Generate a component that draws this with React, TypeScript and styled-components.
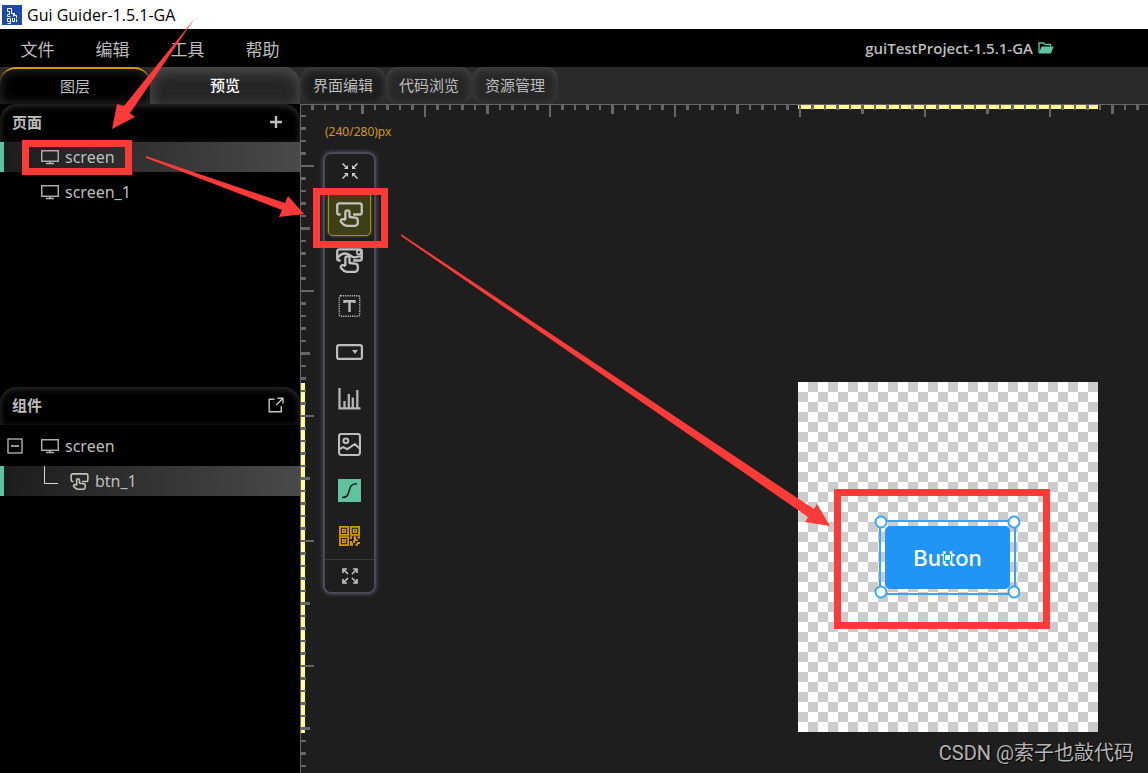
import React from "react";
import styled, { createGlobalStyle, css } from "styled-components";

const ui = `"Noto Sans", "Noto Sans CJK SC", sans-serif`;
const RED = "#fc3a38";
const GREEN = "#5fc3a0";
const TICK = "#666";
const YELLOW = "#ffff90";

const GlobalStyle = createGlobalStyle`
  * { box-sizing: border-box; }
  body { margin: 0; background: #000; }
  button { font: inherit; color: inherit; background: none; border: 0; padding: 0; cursor: pointer; }
  svg { display: block; flex: none; }
`;

const Page = styled.div`
  position: relative;
  display: flex;
  flex-direction: column;
  min-height: 100vh;
  overflow: hidden;
  font-family: ${ui};
  color: #bdbdbd;
  background: #000;
`;

const TitleBar = styled.header`
  display: flex;
  align-items: center;
  gap: 5px;
  height: 29px;
  padding-left: 2px;
  background: #fff;
  color: #000;
  font-family: "Open Sans", sans-serif;
  font-size: 16px;
  line-height: 28px;
`;

const MenuBar = styled.nav`
  display: flex;
  align-items: center;
  justify-content: space-between;
  height: 38px;
  padding-right: 94px;
`;

const MenuItem = styled.button`
  width: 75px;
  height: 38px;
  padding-top: 4px;
  font-size: 17px;
  line-height: 34px;
`;

const Project = styled.button`
  display: flex;
  align-items: center;
  gap: 5px;
  font-family: "Open Sans", sans-serif;
  font-size: 15px;
  font-weight: 600;
`;

const Body = styled.div`
  display: flex;
  flex: 1;
`;

const Sidebar = styled.aside`
  display: flex;
  flex-direction: column;
  width: 300px;
  flex: none;
  background: #000;
`;

const SideTabs = styled.div`
  display: flex;
  height: 37px;
  background: #2b2b2b;
`;

const SideTab = styled.button<{ $current?: boolean }>`
  flex: 1;
  padding-bottom: 2px;
  font-size: 15px;
  border-radius: 16px 16px 0 0;
  ${(p) =>
    p.$current
      ? css`
          background: #000;
          border-top: 2px solid #d69a00;
          box-shadow: inset 0 0 12px #303030;
        `
      : css`
          background: #262626;
          color: #fff;
          font-weight: 500;
          box-shadow: inset 0 4px 14px #525252;
        `}
`;

const Panel = styled.section<{ $basis?: number }>`
  flex: ${(p) => (p.$basis ? `0 0 ${p.$basis}px` : "1")};
`;

const PanelHead = styled.div`
  display: flex;
  align-items: center;
  justify-content: space-between;
  height: 38px;
  padding: 0 15px 2px 12px;
  border-radius: 16px 16px 0 0;
  box-shadow: inset 0 2px 7px #303030;
`;

const PanelTitle = styled.h2`
  margin: 0;
  font-size: 15px;
  font-weight: 700;
  line-height: 20px;
`;

const Tree = styled.div<{ $gap?: number }>`
  display: flex;
  flex-direction: column;
  gap: 5px;
  padding-top: ${(p) => p.$gap ?? 0}px;
`;

const Row = styled.button<{ $selected?: boolean }>`
  display: flex;
  align-items: center;
  gap: 6px;
  width: 100%;
  height: 30px;
  padding-left: 3px;
  font-size: 16px;
  line-height: 30px;
  text-align: left;
  border-left: 4px solid ${(p) => (p.$selected ? GREEN : "transparent")};
  background: ${(p) => (p.$selected ? "linear-gradient(100deg, #1c1c1c, #4a4a4a)" : "none")};
`;

const Lead = styled.span<{ $deep?: boolean }>`
  display: flex;
  align-items: center;
  justify-content: ${(p) => (p.$deep ? "flex-end" : "flex-start")};
  width: ${(p) => (p.$deep ? 57 : 28)}px;
  height: 30px;
  padding-right: ${(p) => (p.$deep ? 6 : 0)}px;
`;

const Workspace = styled.main`
  display: flex;
  flex-direction: column;
  flex: 1;
  min-width: 0;
`;

const WorkTabs = styled.div`
  display: flex;
  height: 37px;
  background: #2b2b2b;
`;

const WorkTab = styled.button<{ $current?: boolean }>`
  width: 86px;
  height: 37px;
  padding-bottom: 2px;
  font-size: 15px;
  border-radius: 12px;
  background: ${(p) => (p.$current ? "#1e1e1e" : "#272727")};
  box-shadow: inset 0 2px 10px #484848;
`;

const Canvas = styled.div`
  position: relative;
  flex: 1;
  overflow: hidden;
  background: #1e1e1e;
`;

const RulerLayer = styled.svg`
  position: absolute;
  inset: 0;
`;

const Coordinates = styled.output`
  position: absolute;
  left: 25px;
  top: 18px;
  color: #d09a08;
  font-size: 12px;
  line-height: 20px;
`;

const Palette = styled.div`
  position: absolute;
  left: 23px;
  top: 48px;
  display: flex;
  flex-direction: column;
  align-items: stretch;
  width: 53px;
  border: 2px solid #4b485a;
  border-radius: 8px;
  box-shadow: 0 0 4px #5a566c;
`;

const Fold = styled.button<{ $foot?: boolean }>`
  display: flex;
  align-items: center;
  justify-content: center;
  height: ${(p) => (p.$foot ? 33 : 34)}px;
  margin-bottom: ${(p) => (p.$foot ? 0 : 3)}px;
  border-top: ${(p) => (p.$foot ? "1px solid #3a3a3a" : "0")};
`;

const Tool = styled.button<{ $current?: boolean }>`
  display: flex;
  align-items: center;
  justify-content: center;
  height: 44px;
  margin: 1px 3px;
  border: 1px solid ${(p) => (p.$current ? "#9a9a00" : "transparent")};
  border-radius: 5px;
  background: ${(p) => (p.$current ? "#3f3f17" : "none")};
  box-shadow: ${(p) => (p.$current ? "0 0 3px #7c7c00" : "none")};
`;

const Screen = styled.div`
  position: absolute;
  left: 498px;
  top: 278px;
  width: 300px;
  height: 350px;
  background: repeating-conic-gradient(#ccc 0 25%, #fff 0 50%) 0 0 / 20px 20px;
`;

const Widget = styled.button`
  position: absolute;
  left: 87px;
  top: 144px;
  width: 125px;
  height: 63px;
  border-radius: 5px;
  background: #2195f6;
  color: #fff;
  font-family: Inter, sans-serif;
  font-size: 22px;
  font-weight: 500;
`;

const Selection = styled.svg`
  position: absolute;
  left: 76px;
  top: 133px;
  pointer-events: none;
`;

const Annotations = styled.svg`
  position: absolute;
  left: 0;
  top: 0;
  pointer-events: none;
`;

const Watermark = styled.div`
  position: absolute;
  right: 14px;
  bottom: 5px;
  font-family: Roboto, "Noto Sans CJK SC", sans-serif;
  font-size: 20px;
  line-height: 30px;
  color: #b4b4b4;
  text-shadow: 1px 1px 1px #000;
`;

const Logo = () => (
  <svg width="20" height="20" viewBox="0 0 20 20">
    <rect width="20" height="20" fill="#1b4aa8" />
    <path
      d="M5.5 3.5H9.5V8.5H12.5V10.5H14.5V13M5.5 3.5V6.5H7.5V9.5H5.5V11.5H8.5M11.5 9V11.5"
      fill="none"
      stroke="#fff"
    />
    <path
      d="M8 13.5H5.5V16.5H8.5M8.5 13.5V18.5H5.5M10.5 13V16.5H12.5V13M14.5 14V17"
      fill="none"
      stroke="#fff"
    />
  </svg>
);

const FolderIcon = () => (
  <svg width="16" height="12" viewBox="0 0 16 12">
    <path d="M1 10.5V1H5.5L7 2.5H12.5V4.5" fill="none" stroke={GREEN} strokeWidth="1.4" />
    <path d="M3.6 4.6H15.6L13 11.6H.6Z" fill={GREEN} />
  </svg>
);

const MonitorIcon = () => (
  <svg width="18" height="15" viewBox="0 0 18 15" fill="none" stroke="#b4b4b4">
    <rect x=".75" y=".75" width="16.5" height="10.5" strokeWidth="1.4" />
    <path d="M9 11V13.5M5 13.6H13" strokeWidth="1.5" />
  </svg>
);

const HAND =
  "M9 17.2V10a2 2 0 0 1 4 0V14.4L18.4 15A2.7 2.7 0 0 1 21 17.7V20a3 3 0 0 1-3 3H11C8.2 23 6.8 21.6 4.8 19.2C4 17 5.8 16 7.4 16.6L9 17.4";

const ButtonIcon = ({ width = 27, height = 25 }: { width?: number; height?: number }) => (
  <svg width={width} height={height} viewBox="0 0 26 24" fill="none" stroke="#c4c4be" strokeWidth="2.2" strokeLinejoin="round">
    <path d="M4.5 12H3.2A2 2 0 0 1 1.2 10V3.2A2 2 0 0 1 3.2 1.2H22.8A2 2 0 0 1 24.8 3.2V10A2 2 0 0 1 22.8 12H16.5" />
    <path d={HAND} />
  </svg>
);

const ImageButtonIcon = () => (
  <svg width="27" height="25" viewBox="0 0 26 24" fill="none" stroke="#c0c0c0" strokeWidth="2.2" strokeLinejoin="round">
    <path d="M4.5 12H3.2A2 2 0 0 1 1.2 10V3.2A2 2 0 0 1 3.2 1.2H22.8A2 2 0 0 1 24.8 3.2V10A2 2 0 0 1 22.8 12H16.5" />
    <path d="M1.2 10C4 6 7 4.8 10 5.4C14 6.4 16 9.6 18.5 9S22 7 25 8.6" />
    <circle cx="22" cy="4" r="2" strokeWidth="1.6" />
    <path d={HAND} />
  </svg>
);

const LabelIcon = () => (
  <svg width="23" height="22" viewBox="0 0 22 22" fill="none" stroke="#bdbdbd">
    <rect x=".8" y=".8" width="20.4" height="20.4" rx="1.5" strokeWidth="1.4" strokeDasharray="1.2 1" />
    <path d="M6 8V6.3H16V8M11 6V17" strokeWidth="2.4" />
  </svg>
);

const DropdownIcon = () => (
  <svg width="27" height="16" viewBox="0 0 27 16">
    <rect x="1.1" y="1.1" width="24.8" height="13.8" rx="2" fill="none" stroke="#bdbdbd" strokeWidth="2.2" />
    <path d="M16 6H22L19 10Z" fill="#bdbdbd" />
  </svg>
);

const ChartIcon = () => (
  <svg width="23" height="23" viewBox="0 0 23 23" fill="none" stroke="#b4b4b4" strokeWidth="2.3">
    <path d="M1.5 1V21.3H22.5M6.5 21V14M10.8 21V7M14.8 21V10.5M19.3 21V3" />
  </svg>
);

const ImageIcon = () => (
  <svg width="23" height="23" viewBox="0 0 22 22" fill="none" stroke="#bdbdbd" strokeWidth="2">
    <rect x="1" y="1" width="20" height="20" rx="2" />
    <circle cx="7.5" cy="7.5" r="2.3" />
    <path d="M1 15.5L5 13.5L9 15.5L16 10.5L21 15" strokeLinejoin="round" />
  </svg>
);

const CurveIcon = () => (
  <svg width="23" height="23" viewBox="0 0 23 23">
    <rect width="23" height="23" fill={GREEN} />
    <path d="M4 18.5C9 18.5 10 16.5 11.2 11.5S14 4.8 19 4.8" fill="none" stroke="#1c1c1c" strokeWidth="1.5" />
  </svg>
);

const QrIcon = () => (
  <svg width="21" height="20" viewBox="0 0 21 20" fill="none" stroke="#d69a00" strokeWidth="1.8">
    <path d="M.9.9H9.1V8.9H.9ZM11.9.9H20.1V8.9H11.9ZM.9 11.1H9.1V19.1H.9Z" />
    <path d="M3.6 3.5H6.4V6.3H3.6ZM14.6 3.5H17.4V6.3H14.6ZM3.6 13.7H6.4V16.5H3.6Z" strokeWidth="1.4" />
    <path
      d="M11 10.3H13V13H11ZM14.5 10.3H17V13.5H19V15H16V17H14V14.5H15V12H14.5ZM18.5 10.3H21V12.5H18.5ZM11 15H13V17H14V19.8H11ZM16.5 17.5H18V16H21V18H19V19.8H16.5Z"
      fill="#d69a00"
      stroke="none"
    />
  </svg>
);

const CollapseIcon = () => (
  <svg width="16" height="16" viewBox="0 0 16 16" fill="#cfcfcf" stroke="#cfcfcf" strokeWidth="1.5">
    <path d="M.5.5L4 4M15.5.5L12 4M.5 15.5L4 12M15.5 15.5L12 12" />
    <path d="M6 2V6H2ZM10 2V6H14ZM6 14V10H2ZM10 14V10H14Z" stroke="none" />
  </svg>
);

const ExpandIcon = () => (
  <svg width="16" height="16" viewBox="0 0 16 16" fill="none" stroke="#bdbdbd" strokeWidth="1.7">
    <path d="M1 5V1H5M1 1L6 6M11 1H15V5M15 1L10 6M1 11V15H5M1 15L6 10M11 15H15V11M15 15L10 10" />
  </svg>
);

const PlusIcon = () => (
  <svg width="18" height="18" viewBox="0 0 18 18">
    <path d="M9 3V15M3 9H15" stroke="#bdbdbd" strokeWidth="2.4" />
  </svg>
);

const ExportIcon = () => (
  <svg width="18" height="18" viewBox="0 0 18 18" fill="none" stroke="#c4c4c4" strokeWidth="1.4">
    <path d="M7.5 3.2H2.2V15.8H14.3V10M10.5 2.2H16V7.5M16 2.2L9.2 9" />
  </svg>
);

const MinusBox = () => (
  <svg width="16" height="16" viewBox="0 0 16 16" fill="none" stroke="#bdbdbd">
    <rect x="1" y="1" width="14" height="14" strokeWidth="1.3" />
    <path d="M4 8H12" strokeWidth="1.6" />
  </svg>
);

const Branch = () => (
  <svg width="14" height="30" viewBox="0 0 14 30">
    <path d="M.5 0V17.5H14" fill="none" stroke="#d8d8d8" />
  </svg>
);

const STEP = 12.5;
const ticks = Array.from({ length: 240 }, (_, i) => i + 1);
const tickLength = (k: number, long: number) => (k % 10 === 0 ? long : k % 5 === 0 ? 9 : 5);

const Rulers = () => (
  <RulerLayer width="100%" height="100%" shapeRendering="crispEdges">
    <rect x="498" y="1" width="300" height="4" fill={YELLOW} />
    <rect x="1" y="279" width="4" height="350" fill={YELLOW} />
    <rect width="100%" height="1" fill={TICK} />
    <rect width="1" height="100%" fill={TICK} />
    {ticks.map((k) => {
      const at = Math.floor(k * STEP);
      const thick = k % 2 ? 3 : 2;
      return <rect key={k} x={at - 1} y="1" width={thick} height={tickLength(k, 12)} fill={TICK} />;
    })}
    {ticks
      .filter((k) => k > 5)
      .map((k) => {
        const at = Math.floor(k * STEP) - 63;
        const thick = k % 2 ? 3 : 2;
        return <rect key={k} x="1" y={at - 1} width={tickLength(k, 13)} height={thick} fill={TICK} />;
      })}
  </RulerLayer>
);

const handles = [
  [5, 7],
  [138, 7],
  [5, 77],
  [138, 77],
];

const tools = [
  { name: "按钮", icon: <ButtonIcon />, current: true },
  { name: "图像按钮", icon: <ImageButtonIcon /> },
  { name: "标签", icon: <LabelIcon /> },
  { name: "下拉列表", icon: <DropdownIcon /> },
  { name: "图表", icon: <ChartIcon /> },
  { name: "图片", icon: <ImageIcon /> },
  { name: "动画", icon: <CurveIcon /> },
  { name: "二维码", icon: <QrIcon /> },
];

export default function App() {
  return (
    <>
      <GlobalStyle />
      <Page>
        <TitleBar>
          <Logo />
          Gui Guider-1.5.1-GA
        </TitleBar>
        <MenuBar>
          <div>
            {["文件", "编辑", "工具", "帮助"].map((label) => (
              <MenuItem key={label}>{label}</MenuItem>
            ))}
          </div>
          <Project>
            guiTestProject-1.5.1-GA
            <FolderIcon />
          </Project>
        </MenuBar>
        <Body>
          <Sidebar>
            <SideTabs>
              <SideTab $current>图层</SideTab>
              <SideTab>预览</SideTab>
            </SideTabs>
            <Panel $basis={283}>
              <PanelHead>
                <PanelTitle>页面</PanelTitle>
                <button aria-label="添加页面">
                  <PlusIcon />
                </button>
              </PanelHead>
              <Tree>
                <Row $selected>
                  <Lead />
                  <MonitorIcon />
                  screen
                </Row>
                <Row>
                  <Lead />
                  <MonitorIcon />
                  screen_1
                </Row>
              </Tree>
            </Panel>
            <Panel>
              <PanelHead>
                <PanelTitle>组件</PanelTitle>
                <button aria-label="弹出组件">
                  <ExportIcon />
                </button>
              </PanelHead>
              <Tree $gap={6}>
                <Row>
                  <Lead>
                    <MinusBox />
                  </Lead>
                  <MonitorIcon />
                  screen
                </Row>
                <Row $selected>
                  <Lead $deep>
                    <Branch />
                  </Lead>
                  <ButtonIcon width={19} height={17} />
                  btn_1
                </Row>
              </Tree>
            </Panel>
          </Sidebar>
          <Workspace>
            <WorkTabs>
              <WorkTab $current>界面编辑</WorkTab>
              <WorkTab>代码浏览</WorkTab>
              <WorkTab>资源管理</WorkTab>
            </WorkTabs>
            <Canvas>
              <Rulers />
              <Coordinates>(240/280)px</Coordinates>
              <Palette>
                <Fold aria-label="收起">
                  <CollapseIcon />
                </Fold>
                {tools.map((tool) => (
                  <Tool key={tool.name} aria-label={tool.name} $current={tool.current}>
                    {tool.icon}
                  </Tool>
                ))}
                <Fold $foot aria-label="展开">
                  <ExpandIcon />
                </Fold>
              </Palette>
              <Screen>
                <Widget>Button</Widget>
                <Selection width="146" height="86" viewBox="-2 0 146 86">
                  <rect x="4" y="6" width="135" height="73" fill="none" stroke="#36a5fa" strokeWidth="2" />
                  {handles.map(([x, y]) => (
                    <circle key={`${x}-${y}`} cx={x} cy={y} r="5.5" fill="#fff" stroke="#36a5fa" strokeWidth="2" />
                  ))}
                  <rect x="68.5" y="39.5" width="6" height="6" fill="#fff" stroke="#14a8b8" />
                </Selection>
              </Screen>
            </Canvas>
          </Workspace>
        </Body>
        <Annotations width="1148" height="773" viewBox="0 0 1148 773" fill={RED}>
          <polygon points="195,18 124,106 117,104 112,129 135,117 130,113" />
          <polygon points="146,156 285,203 288,196 304,214 279,217 282,210 146,158" />
          <polygon points="401,234 814,509 817,504 830,526 805,522 808,517 401,236" />
          <g fill="none" stroke={RED} strokeWidth="7">
            <rect x="25.5" y="143.5" width="103" height="28" />
            <rect x="316.5" y="191.5" width="68" height="53" />
            <rect x="837.5" y="492.5" width="209" height="133" />
          </g>
        </Annotations>
        <Watermark>CSDN @索子也敲代码</Watermark>
      </Page>
    </>
  );
}
